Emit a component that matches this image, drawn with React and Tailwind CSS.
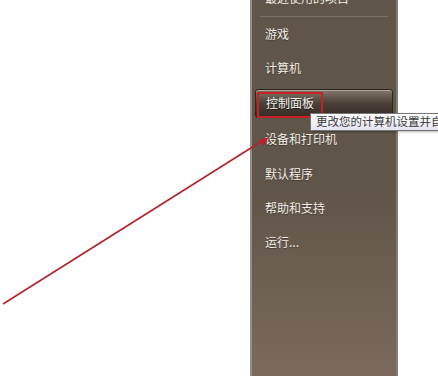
import React from "react";

const items = [
    { label: "游戏", h: "h-[33px]" },
    { label: "计算机", h: "h-[35px]" },
    { label: "控制面板", h: "h-[36px]", active: true },
    { label: "设备和打印机", h: "h-[36px]" },
    { label: "默认程序", h: "h-[34px]" },
    { label: "帮助和支持", h: "h-[34px]" },
    { label: "运行...", h: "h-[34px]" },
];

function MenuItem({ label, h, active }) {
    if (active)
        return (
            <div className={`${h} flex items-center px-[3px]`}>
                <div className="relative w-full h-[29px] rounded-[3px] border border-[#2e2720] shadow-[inset_0_1px_0_rgba(255,255,255,0.35)] bg-gradient-to-b from-[#82786c] via-[#4a4037] to-[#372e27] flex items-center pl-[10px]">
                    <span className="text-[12px] text-[#f7f4ef] [text-shadow:0_1px_1px_rgba(0,0,0,0.6)]">
                        {label}
                    </span>
                    <div className="absolute left-[1px] top-[2px] w-[66px] h-[26px] border-2 border-[#c81f28]" />
                </div>
            </div>
        );
    return (
        <div className={`${h} flex items-center pl-[13px]`}>
            <span className="text-[12px] text-[#f2eee8] [text-shadow:0_1px_1px_rgba(0,0,0,0.35)]">
                {label}
            </span>
        </div>
    );
}

export default function App() {
    return (
        <div className="relative w-[438px] h-[376px] bg-white overflow-hidden flex font-['Noto_Sans_CJK_SC','Noto_Sans',sans-serif]">
            <div className="ml-[250px] w-[148px] h-full flex flex-col border-l-2 border-l-[#978d83] border-r-2 border-r-[#857b71] bg-gradient-to-b from-[#5f554a] via-[#5f5548] to-[#7b6a5b]">
                <div className="mt-[-21px] h-[37px] flex items-center pl-[13px]">
                    <span className="text-[12px] text-[#f2eee8]">最近使用的项目</span>
                </div>
                <div className="mx-[8px] h-px bg-[#7a7167]" />
                {items.map((item) => (
                    <MenuItem key={item.label} {...item} />
                ))}
            </div>

            <div className="absolute left-[310px] top-[113px] h-[18px] pl-[5px] pr-2 border border-[#767676] bg-gradient-to-b from-[#ffffff] to-[#e4e5f0] flex items-center whitespace-nowrap shadow-[1px_1px_2px_rgba(0,0,0,0.3)]">
                <span className="text-[11.5px] leading-none text-[#3a3a3a]">更改您的计算机设置并自定义其功能</span>
            </div>

            <svg className="absolute left-0 top-0" width="438" height="376" viewBox="0 0 438 376">
                <line x1="3" y1="304" x2="262" y2="141" stroke="#b4232b" strokeWidth="1.6" />
                <polygon points="269,137 259,140 263,146" fill="#c01f28" />
            </svg>
        </div>
    );
}
